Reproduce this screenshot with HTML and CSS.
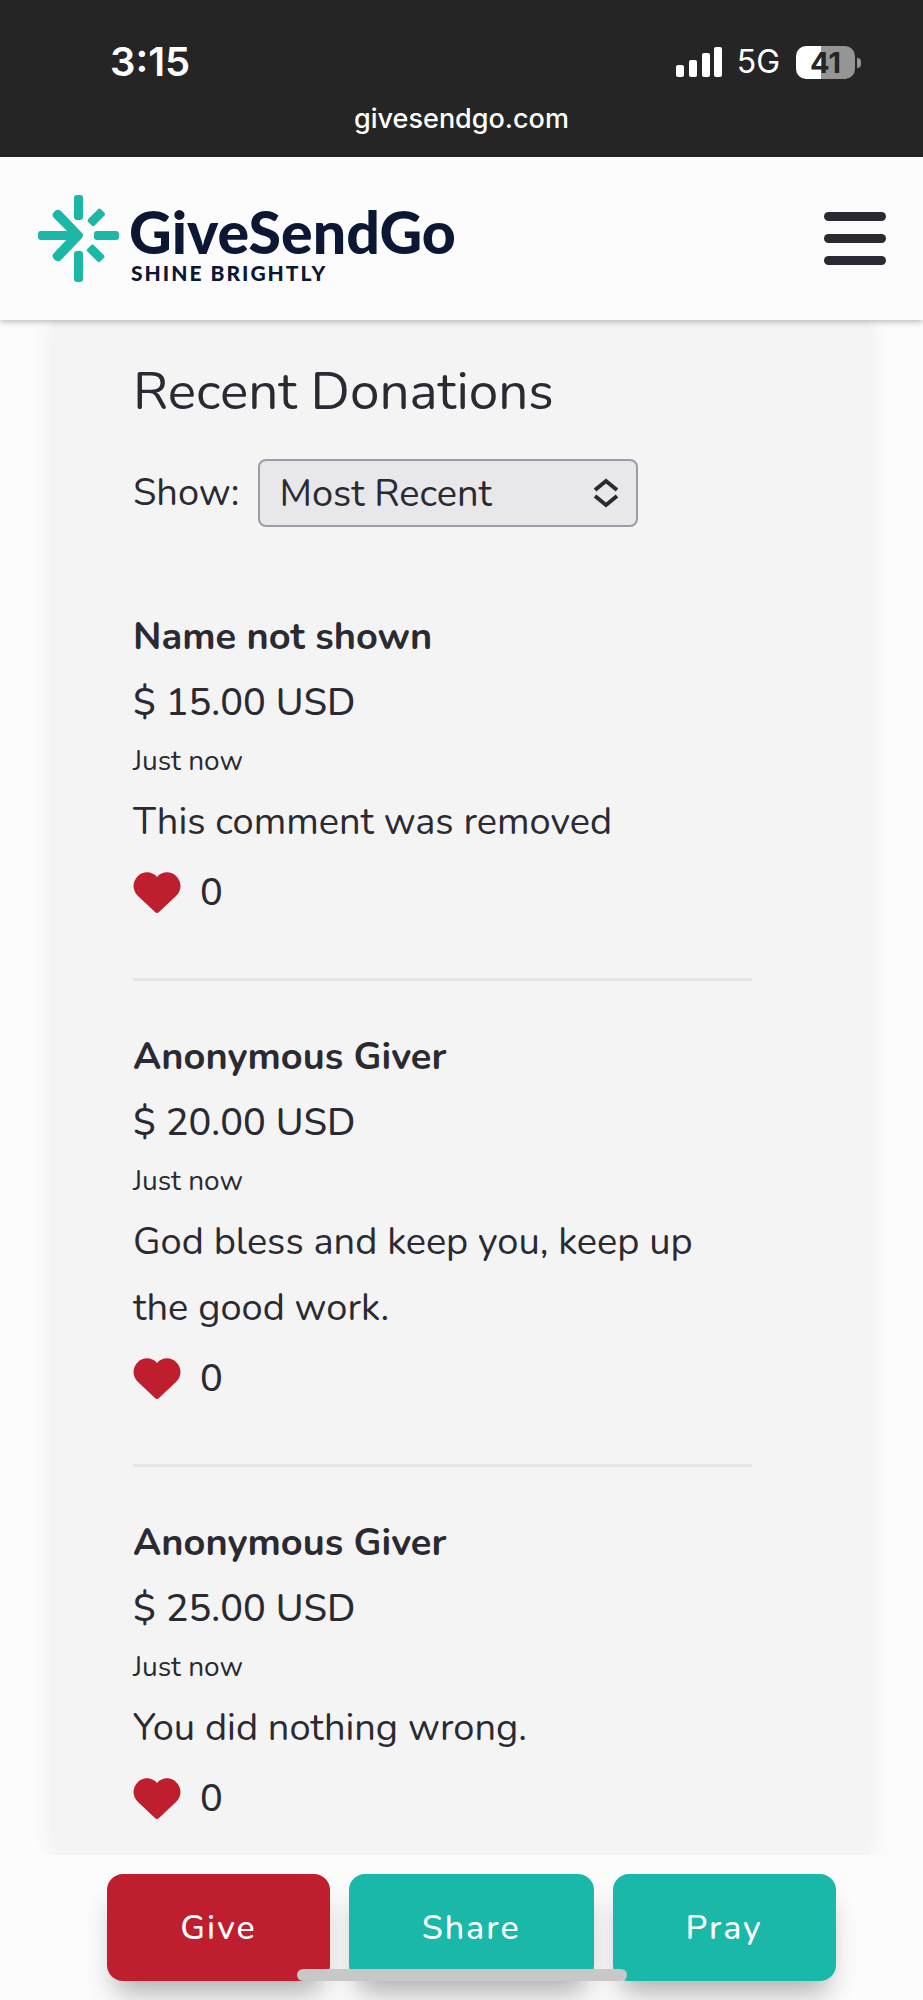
FILE: index.html
```html
<!DOCTYPE html>
<html lang="en">

  <head>
    <meta charset="utf-8">
    <meta name="viewport" content="width=device-width, initial-scale=1">
    <title>Recent Donations</title>
    <link rel="stylesheet" href="styles.css">
  </head>

  <body>

    <div class="statusbar">
      <div class="status-row">
        <span class="time">3:15</span>
        <div class="status-icons">
          <svg class="signal" width="47" height="30" viewBox="0 0 47 30" fill="#fff">
            <rect x="0" y="18" width="8" height="12" rx="2"/>
            <rect x="13" y="13" width="8" height="17" rx="2"/>
            <rect x="26" y="6" width="8" height="24" rx="2"/>
            <rect x="38" y="0" width="8" height="30" rx="2"/>
          </svg>
          <span class="network">5G</span>
          <span class="battery">41</span>
        </div>
      </div>
      <div class="url">givesendgo.com</div>
    </div>

    <header class="header">
      <a class="logo" href="#">
        <svg width="82" height="88" viewBox="0 0 82 88" fill="#1bb8a8">
          <rect x="36" y="0" width="9" height="25" rx="3"/>
          <rect x="36" y="56" width="9" height="31" rx="3"/>
          <rect x="56" y="36" width="25" height="9" rx="3"/>
          <rect x="0" y="36" width="42" height="9" rx="3"/>
          <rect x="49" y="18" width="18" height="9" rx="2" transform="rotate(-45 58 22)"/>
          <rect x="49" y="54" width="18" height="9" rx="2" transform="rotate(45 58 58)"/>
          <path d="M16 17Q19 13 23 16L44 38Q46 40 44 43L23 65Q19 68 16 64Q13 61 16 58L33 40L16 23Q13 20 16 17Z"/>
        </svg>
        <span class="logo-text">
          <span class="logo-name">GiveSendGo</span>
          <span class="logo-tag">SHINE BRIGHTLY</span>
        </span>
      </a>
      <button class="menu" aria-label="Menu">
        <span></span>
        <span></span>
        <span></span>
      </button>
    </header>

    <main class="panel">
      <h1>Recent Donations</h1>

      <div class="filter">
        <label for="show">Show:</label>
        <div class="select-wrap">
          <select id="show">
            <option>Most Recent</option>
          </select>
          <svg width="26" height="30" viewBox="0 0 26 30" fill="none" stroke="#2b2a33" stroke-width="4">
            <path d="M2 12L13 3L24 12M2 18L13 27L24 18"/>
          </svg>
        </div>
      </div>

      <div class="donation">
        <h2>Name not shown</h2>
        <p class="amount">$ 15.00 USD</p>
        <p class="when">Just now</p>
        <p class="comment">This comment was removed</p>
        <div class="likes">
          <svg width="48" height="42" viewBox="0 0 48 42" fill="#be1e2d"><path d="M24 5C29-1 38-1 43 4C49 10 49 18 43 24L26 40Q24 42 22 40L5 24C-1 18-1 10 5 4C10-1 19-1 24 5Z"/></svg>
          <span>0</span>
        </div>
      </div>

      <div class="donation">
        <h2>Anonymous Giver</h2>
        <p class="amount">$ 20.00 USD</p>
        <p class="when">Just now</p>
        <p class="comment">God bless and keep you, keep up the good work.</p>
        <div class="likes">
          <svg width="48" height="42" viewBox="0 0 48 42" fill="#be1e2d"><path d="M24 5C29-1 38-1 43 4C49 10 49 18 43 24L26 40Q24 42 22 40L5 24C-1 18-1 10 5 4C10-1 19-1 24 5Z"/></svg>
          <span>0</span>
        </div>
      </div>

      <div class="donation">
        <h2>Anonymous Giver</h2>
        <p class="amount">$ 25.00 USD</p>
        <p class="when">Just now</p>
        <p class="comment">You did nothing wrong.</p>
        <div class="likes">
          <svg width="48" height="42" viewBox="0 0 48 42" fill="#be1e2d"><path d="M24 5C29-1 38-1 43 4C49 10 49 18 43 24L26 40Q24 42 22 40L5 24C-1 18-1 10 5 4C10-1 19-1 24 5Z"/></svg>
          <span>0</span>
        </div>
      </div>
    </main>

    <footer class="actions">
      <button class="give">Give</button>
      <button>Share</button>
      <button>Pray</button>
      <div class="home-bar"></div>
    </footer>

  </body>

</html>
```
FILE: styles.css
```css
* {box-sizing: border-box;}

body {
  margin: 0;
  min-height: 100vh;
  display: flex;
  flex-direction: column;
  font-family: "Nunito", "Open Sans", sans-serif;
  font-size: 38px;
  line-height: 66px;
  background-color: #fcfcfc;
  color: #2b2a33;
}

h1, h2, p {margin: 0;}

/* phone status bar */
.statusbar {
  height: 157px;
  padding-top: 36px;
  background-color: #252525;
  color: #fff;
  font-family: Inter, sans-serif;
}

.status-row {
  display: flex;
  justify-content: space-between;
  align-items: center;
  height: 52px;
  padding: 0 68px 0 110px;
}

.time {
  font-size: 40px;
  font-weight: 600;
}

.status-icons {
  display: flex;
  align-items: center;
}

.network {
  margin: 0 16px 0 14px;
  font-size: 32px;
}

.battery {
  position: relative;
  width: 59px;
  height: 33px;
  border-radius: 10px;
  background: linear-gradient(to right, #fff 42%, #959595 42%);
  color: #252525;
  font-size: 29px;
  font-weight: 700;
  line-height: 33px;
  text-align: center;
}

.battery::after {
  content: "";
  position: absolute;
  top: 12px;
  right: -6px;
  width: 4px;
  height: 10px;
  border-radius: 0 4px 4px 0;
  background-color: #959595;
}

.url {
  font-size: 27px;
  font-weight: 500;
  line-height: 62px;
  text-align: center;
}

/* site header */
.header {
  position: relative;
  z-index: 1;
  display: flex;
  justify-content: space-between;
  align-items: center;
  height: 163px;
  padding: 0 37px 0 38px;
  background-color: #fcfcfc;
  box-shadow: 0 2px 6px rgba(0,0,0,0.25);
}

.logo {
  display: flex;
  align-items: center;
  gap: 9px;
  color: #0b1733;
  text-decoration: none;
  font-family: Lato, sans-serif;
  font-weight: 900;
}

.logo-text {
  display: flex;
  flex-direction: column;
  padding-top: 14px;
}

.logo-name {
  font-size: 59px;
  line-height: 54px;
}

.logo-tag {
  padding-left: 2px;
  font-size: 21px;
  line-height: 28px;
  letter-spacing: 2px;
}

.menu {
  display: flex;
  flex-direction: column;
  gap: 13px;
  padding: 0;
  border: none;
  background: none;
  cursor: pointer;
}

.menu span {
  width: 62px;
  height: 9px;
  border-radius: 5px;
  background-color: #2b2a33;
}

/* donations */
.panel {
  flex: 1;
  margin: 0 54px;
  padding: 38px 117px 0 79px;
  background-color: #f4f4f4;
  box-shadow: 0 0 24px rgba(0,0,0,0.08);
}

h1 {
  font-size: 53px;
  font-weight: 400;
  line-height: 68px;
}

.filter {
  display: flex;
  align-items: center;
  gap: 19px;
  margin: 33px 0 77px;
}

.select-wrap {
  position: relative;
  width: 380px;
}

.select-wrap svg {
  position: absolute;
  top: 19px;
  right: 19px;
  pointer-events: none;
}

select {
  appearance: none;
  display: block;
  width: 100%;
  height: 68px;
  padding: 0 19px;
  border: 2px solid #9c9ca8;
  border-radius: 8px;
  background-color: #e8e8ea;
  color: #2b2a33;
  font-family: inherit;
  font-size: 38px;
}

.donation {
  margin-bottom: 43px;
  padding-bottom: 52px;
  border-bottom: 3px solid #e6e6e6;
}

.donation:last-child {
  margin-bottom: 0;
  padding-bottom: 0;
  border-bottom: none;
}

h2 {
  font-size: 38px;
  font-weight: 700;
}

.amount {font-weight: 500;}

.when {
  margin-bottom: 3px;
  font-size: 28px;
  line-height: 50px;
}

.likes {
  display: flex;
  align-items: center;
  gap: 19px;
  margin-top: 5px;
  font-weight: 500;
}

/* bottom buttons */
.actions {
  position: sticky;
  bottom: 0;
  z-index: 1;
  display: flex;
  justify-content: center;
  gap: 19px;
  height: 145px;
  padding: 19px 0 19px 20px;
  overflow: hidden;
  background-color: #fcfcfc;
}

.actions button {
  padding: 0 73px;
  border: none;
  border-radius: 16px;
  background-color: #19b8a8;
  box-shadow: 0 20px 28px -8px rgba(0,0,0,0.3);
  color: #fff;
  font-family: inherit;
  font-size: 34px;
  font-weight: 500;
  letter-spacing: 2px;
  cursor: pointer;
}

.actions .give {background-color: #be1e2d;}

.home-bar {
  position: absolute;
  bottom: 19px;
  left: 50%;
  width: 330px;
  height: 12px;
  margin-left: -165px;
  border-radius: 6px;
  background-color: #c8c8c8;
}
```
